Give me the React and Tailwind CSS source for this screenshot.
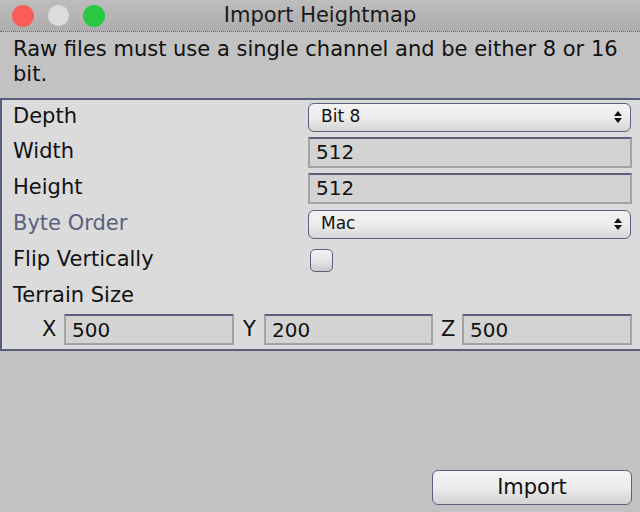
import React from "react";

const F = { fontFamily: '"DejaVu Sans", "Liberation Sans", sans-serif' };

function Field({ value, w }) {
  return (
    <div
      className={`${w} h-[31px] bg-[#d3d3d3] border-2 border-[#a3a3a6] border-t-[#5b607c] flex items-center pl-[6px] text-[20px] text-[#111]`}
    >
      {value}
    </div>
  );
}

function Arrows() {
  return (
    <svg width="8" height="12" viewBox="0 0 8 12" className="mr-[8px]">
      <path d="M4 0 L8 5 L0 5 Z" fill="#111" />
      <path d="M0 7 L8 7 L4 12 Z" fill="#111" />
    </svg>
  );
}

function Select({ value }) {
  return (
    <div className="w-[323px] h-[29px] rounded-[6px] border-[1.5px] border-[#5b607c] bg-gradient-to-b from-[#f3f3f3] via-[#ececec] to-[#d6d6d6] flex items-center justify-between pl-[12px] text-[17px] text-[#111]">
      <span>{value}</span>
      <Arrows />
    </div>
  );
}

function Row({ label, h = "h-[36px]", children, muted }) {
  return (
    <div className={`${h} flex items-center`}>
      <div className={`w-[306px] pl-[11px] text-[21px] ${muted ? "text-[#5a5f7e]" : "text-[#111]"}`}>
        {label}
      </div>
      {children}
    </div>
  );
}

export default function App() {
  return (
    <div style={F} className="w-[640px] h-[512px] bg-[#c2c2c2] flex flex-col overflow-hidden">
      <div className="h-[32px] bg-gradient-to-b from-[#bdbdbd] to-[#adadad] border-b border-dotted border-[#6b6e80] flex items-center relative shrink-0">
        <div className="flex items-center gap-[14px] pl-[12px]">
          <div className="w-[22px] h-[22px] rounded-full bg-[#fc5c57]" />
          <div className="w-[21px] h-[21px] rounded-full bg-[#dcdcdc]" />
          <div className="w-[22px] h-[22px] rounded-full bg-[#29c840]" />
        </div>
        <div className="absolute inset-0 flex items-center justify-center text-[21px] text-[#1a1a1a]">
          Import Heightmap
        </div>
      </div>
      <div className="h-[66px] pl-[13px] pr-[8px] pt-[5px] text-[21px] leading-[25px] text-[#111] shrink-0">
        Raw files must use a single channel and be either 8 or 16 bit.
      </div>
      <div className="bg-[#dbdbdb] border-y-2 border-l-2 border-[#595e7c] flex flex-col shrink-0">
        <Row label="Depth" h="h-[34px]">
          <Select value="Bit 8" />
        </Row>
        <Row label="Width">
          <Field value="512" w="w-[324px]" />
        </Row>
        <Row label="Height">
          <Field value="512" w="w-[324px]" />
        </Row>
        <Row label="Byte Order" muted>
          <Select value="Mac" />
        </Row>
        <Row label="Flip Vertically">
          <div className="ml-[2px] w-[23px] h-[23px] rounded-[5px] border-[1.5px] border-[#5b607c] bg-gradient-to-b from-[#f2f2f2] via-[#e6e6e6] to-[#c8c8c8]" />
        </Row>
        <Row label="Terrain Size" />
        <div className="h-[32px] flex items-center pb-[1px] mb-[3px] text-[21px] text-[#111]">
          <span className="ml-[40px] w-[22px]">X</span>
          <Field value="500" w="w-[170px]" />
          <span className="ml-[9px] w-[21px]">Y</span>
          <Field value="200" w="w-[169px]" />
          <span className="ml-[8px] w-[21px]">Z</span>
          <Field value="500" w="w-[170px]" />
        </div>
      </div>
      <div className="flex-1 flex items-end justify-end pr-[8px] pb-[7px]">
        <div className="w-[200px] h-[35px] rounded-[6px] border-[1.5px] border-[#5b607c] bg-gradient-to-b from-[#f3f3f3] via-[#ececec] to-[#d2d2d2] flex items-center justify-center text-[21px] text-[#111]">
          Import
        </div>
      </div>
    </div>
  );
}
